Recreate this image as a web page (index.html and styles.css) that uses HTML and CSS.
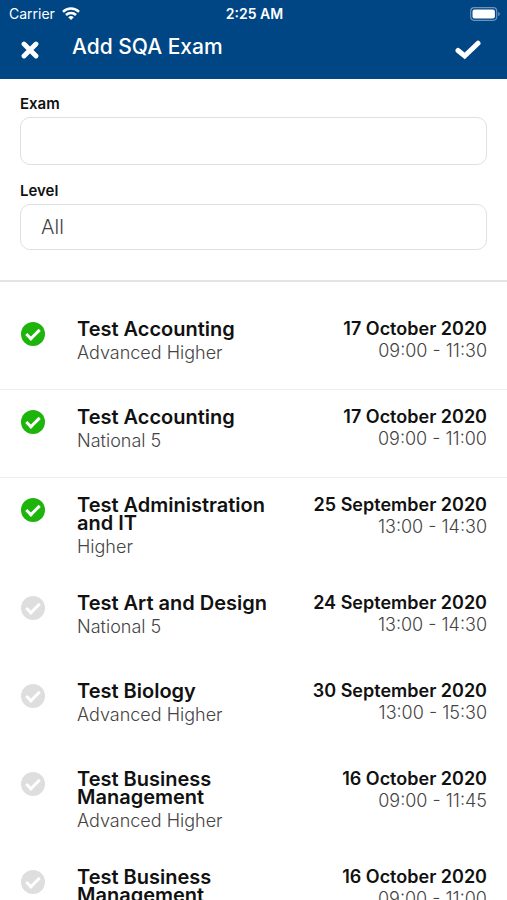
FILE: index.html
```html
<!DOCTYPE html>
<html lang="en">
<head>
  <meta charset="UTF-8">
  <meta name="viewport" content="width=device-width, initial-scale=1">
  <title>Add SQA Exam</title>
  <link rel="stylesheet" href="styles.css">
</head>
<body>

  <header class="header">
    <div class="status-bar">
      <div class="carrier">
        <span>Carrier</span>
        <svg class="wifi" viewBox="0 0 18 13" aria-hidden="true">
          <g fill="none" stroke="#fff" stroke-width="2.5">
            <path d="M1 4.8a11.5 11.5 0 0 1 16 0"/>
            <path d="M4 8a7.2 7.2 0 0 1 10 0"/>
          </g>
          <path fill="#fff" d="M6.2 10.2a4.1 4.1 0 0 1 5.6 0L9 13z"/>
        </svg>
      </div>
      <span class="clock">2:25 AM</span>
      <svg class="battery" viewBox="0 0 30 14" aria-hidden="true">
        <rect x=".7" y=".7" width="26" height="12.6" rx="3.5" fill="none" stroke="#6f94b8" stroke-width="1.2"/>
        <rect x="2.5" y="2.5" width="22.4" height="9" rx="2" fill="#fff"/>
        <path fill="#6f94b8" d="M28.2 5c1 .3 1.5 1.1 1.5 2s-.5 1.7-1.5 2z"/>
      </svg>
    </div>
    <div class="nav">
      <button class="nav-button" type="button" aria-label="Close">
        <svg width="18" height="18" viewBox="0 0 18 18" aria-hidden="true">
          <path d="M3 3l12 12M15 3L3 15" stroke="#fff" stroke-width="4.8" stroke-linecap="round"/>
        </svg>
      </button>
      <h1 class="title">Add SQA Exam</h1>
      <button class="nav-button" type="button" aria-label="Save">
        <svg width="26" height="20" viewBox="0 0 26 20" aria-hidden="true">
          <path d="M3 10.5L9.7 16L23 3.200" fill="none" stroke="#fff" stroke-width="5" stroke-linecap="round"/>
        </svg>
      </button>
    </div>
  </header>

  <form class="filters">
    <label class="filter-label" for="exam">Exam</label>
    <input class="field" type="text" id="exam">
    <label class="filter-label" for="level">Level</label>
    <select class="field" id="level">
      <option>All</option>
      <option>National 5</option>
      <option>Higher</option>
      <option>Advanced Higher</option>
    </select>
  </form>

  <main class="list">
    <label class="exam divided">
      <input class="check" type="checkbox" checked>
      <span class="info">
        <span class="name">Test Accounting</span>
        <span class="level">Advanced Higher</span>
      </span>
      <span class="when">
        <span class="date">17 October 2020</span>
        <span class="time">09:00 - 11:30</span>
      </span>
    </label>
    <label class="exam divided">
      <input class="check" type="checkbox" checked>
      <span class="info">
        <span class="name">Test Accounting</span>
        <span class="level">National 5</span>
      </span>
      <span class="when">
        <span class="date">17 October 2020</span>
        <span class="time">09:00 - 11:00</span>
      </span>
    </label>
    <label class="exam">
      <input class="check" type="checkbox" checked>
      <span class="info">
        <span class="name">Test Administration and IT</span>
        <span class="level">Higher</span>
      </span>
      <span class="when">
        <span class="date">25 September 2020</span>
        <span class="time">13:00 - 14:30</span>
      </span>
    </label>
    <label class="exam">
      <input class="check" type="checkbox">
      <span class="info">
        <span class="name">Test Art and Design</span>
        <span class="level">National 5</span>
      </span>
      <span class="when">
        <span class="date">24 September 2020</span>
        <span class="time">13:00 - 14:30</span>
      </span>
    </label>
    <label class="exam">
      <input class="check" type="checkbox">
      <span class="info">
        <span class="name">Test Biology</span>
        <span class="level">Advanced Higher</span>
      </span>
      <span class="when">
        <span class="date">30 September 2020</span>
        <span class="time">13:00 - 15:30</span>
      </span>
    </label>
    <label class="exam">
      <input class="check" type="checkbox">
      <span class="info">
        <span class="name">Test Business Management</span>
        <span class="level">Advanced Higher</span>
      </span>
      <span class="when">
        <span class="date">16 October 2020</span>
        <span class="time">09:00 - 11:45</span>
      </span>
    </label>
    <label class="exam">
      <input class="check" type="checkbox">
      <span class="info">
        <span class="name">Test Business Management</span>
        <span class="level">Higher</span>
      </span>
      <span class="when">
        <span class="date">16 October 2020</span>
        <span class="time">09:00 - 11:00</span>
      </span>
    </label>
  </main>

</body>
</html>
```

FILE: styles.css
```css
* {
  box-sizing: border-box;
}
body {
  margin: 0;
  height: 100vh;
  display: flex;
  flex-direction: column;
  font-family: Inter, "Liberation Sans", sans-serif;
  background: #fff;
  color: #111;
}

/* header */
.header {
  background: #004685;
  color: #fff;
  padding-bottom: 12px;
}
.status-bar {
  display: grid;
  grid-template-columns: 1fr auto 1fr;
  align-items: center;
  height: 27px;
  padding: 0 7px 0 9px;
  font-size: 14px;
}
.carrier {
  display: flex;
  align-items: center;
  gap: 7px;
}
.wifi {
  width: 18px;
  height: 13px;
}
.clock {
  font-weight: 600;
}
.battery {
  width: 30px;
  height: 14px;
  justify-self: end;
}
.nav {
  display: flex;
  align-items: center;
  height: 40px;
  padding: 0 20px;
}
.nav-button {
  display: flex;
  align-items: center;
  height: 40px;
  padding: 6px 6px 0 1px;
  border: 0;
  background: none;
  cursor: pointer;
}
.title {
  flex: 1;
  margin: 0 0 0 27px;
  font-size: 21px;
  line-height: 40px;
  font-weight: 500;
}

/* filters */
.filters {
  padding: 15px 20px 30px;
  border-bottom: 2px solid #e4e4e4;
}
.filter-label {
  display: block;
  margin-bottom: 3px;
  font-size: 15px;
  line-height: 20px;
  font-weight: 600;
}
.field {
  display: block;
  width: 100%;
  height: 48px;
  padding: 0 20px;
  border: 1px solid #e0e0e0;
  border-radius: 10px;
  background: #fff;
  color: #444;
  font-family: inherit;
  font-size: 20px;
  font-weight: 300;
  appearance: none;
}
select.field {
  height: 46px;
}
.field + .filter-label {
  margin-top: 16px;
}

/* exam list */
.list {
  flex: 1;
  min-height: 0;
  padding-top: 20px;
  overflow-y: auto;
  scrollbar-width: none;
}
.exam {
  display: flex;
  align-items: flex-start;
  min-height: 88px;
  padding: 18px 20px 18px;
  border-bottom: 1px solid transparent;
}
.divided {
  border-bottom-color: #ececec;
}
.check {
  position: relative;
  flex: none;
  width: 24px;
  height: 24px;
  margin: 2px 32px 0 1px;
  border-radius: 50%;
  background: #dedede;
  appearance: none;
}
.check:checked {
  background: #1db50b;
}
.check::before {
  content: "";
  position: absolute;
  top: 7px;
  left: 5px;
  box-sizing: border-box;
  width: 14px;
  height: 8px;
  border: solid #fff;
  border-width: 0 0 3px 3px;
  transform: rotate(-45deg);
}
.info {
  flex: 1;
  max-width: 200px;
}
.name {
  display: block;
  margin-bottom: 5px;
  font-size: 20px;
  line-height: 18px;
  font-weight: 600;
}
.level {
  display: block;
  color: #444;
  font-size: 18px;
  line-height: 20px;
  font-weight: 300;
}
.when {
  margin-left: auto;
  text-align: right;
  white-space: nowrap;
}
.date {
  display: block;
  margin-bottom: 3px;
  font-size: 18px;
  line-height: 18px;
  font-weight: 600;
}
.time {
  display: block;
  color: #444;
  font-size: 18px;
  line-height: 20px;
  font-weight: 300;
}
```
